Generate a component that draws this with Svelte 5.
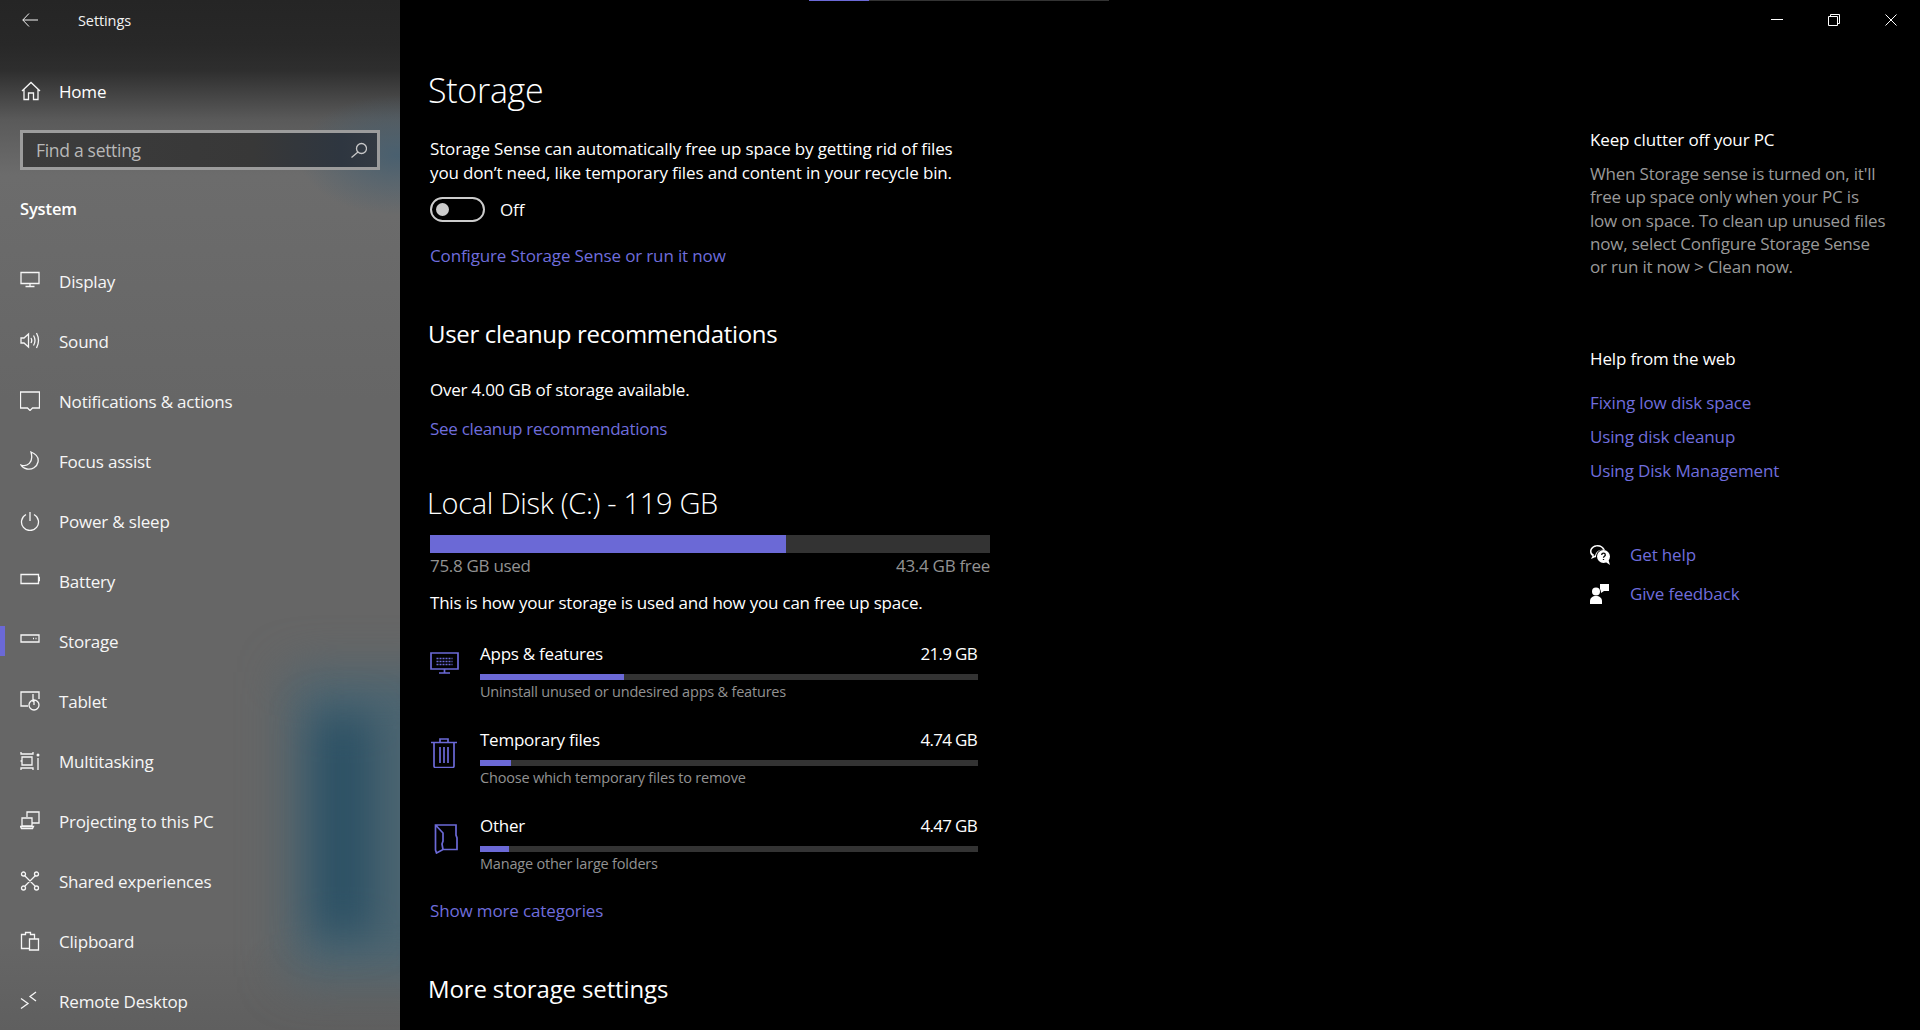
<script>
  const nav = [
    { label: 'Display', d: 'M1 1.500h18v11H1zM10 12.500v2.500M5.500 15.500h9' },
    { label: 'Sound', d: 'M1 7v5h3l4.500 4V3L4 7zM11 7q1.500 2.500 0 5M13.500 4.500q3 5 0 10M16.500 2q4 7.500 0 15' },
    { label: 'Notifications & actions', d: 'M.5 1h19v16h-7l-2.500 2.500L7.500 17H.5z' },
    { label: 'Focus assist', d: 'M11 1c5 2 8 5 7 10-1 5-6 8-11 7-3-.500-5-2-6-4 6 2 13-2 10-13z' },
    { label: 'Power & sleep', d: 'M10 1v9M6 3.500a8.500 8.500 0 1 0 8 0' },
    { label: 'Battery', d: 'M1 3.500h17.500v9H1zM18.500 6.500h1v3h-1' },
    { label: 'Storage', active: true, d: 'M1 4h18v7H1zM13 7.500h1M15.500 7.500h1' },
    { label: 'Tablet', d: 'M8 15H1V1h18v7M13 3v8M9 14a5 5 0 1 0 10 0 5 5 0 0 0-10 0M14 9v5' },
    { label: 'Multitasking', d: 'M1 1v2h12V1M1 19v-2h12v2M2 6h10v8H2zM18 7v12M.5 10h1', dot: true },
    { label: 'Projecting to this PC', d: 'M7 6V1h12v11h-7M2 7h10v8H2zM.5 15.500h13l-1 2h-11z' },
    { label: 'Shared experiences', d: 'M5 5l10 10M15 5L5 15M1.500 3a2 2 0 1 0 4 0 2 2 0 0 0-4 0M14.500 3a2 2 0 1 0 4 0 2 2 0 0 0-4 0M1.500 17a2 2 0 1 0 4 0 2 2 0 0 0-4 0M14.500 17a2 2 0 1 0 4 0 2 2 0 0 0-4 0' },
    { label: 'Clipboard', d: 'M9 17.500H1.500v-14h4V1.500h5v2h4v4M9.500 8h9v11h-9z' },
    { label: 'Remote Desktop', d: 'M1 7.500l7 5-7 5M16 1l-6 4.500 6 4.500' }
  ];
  const cats = [
    { name: 'Apps & features', size: '21.9 GB', w: 144, sub: 'Uninstall unused or undesired apps & features', kind: 'apps' },
    { name: 'Temporary files', size: '4.74 GB', w: 31, sub: 'Choose which temporary files to remove', kind: 'trash' },
    { name: 'Other', size: '4.47 GB', w: 29, sub: 'Manage other large folders', kind: 'other' }
  ];
</script>

<div class="window">
  <aside class="side">
    <header class="titlebar">
      <svg class="back" width="16" height="14" viewBox="0 0 16 14"><path d="M7 .5L.8 7 7 13.500M.8 7H16" /></svg>
      <span>Settings</span>
    </header>
    <div class="home">
      <svg class="ic" width="20" height="20" viewBox="0 0 20 20"><path d="M1 10L10 1.500 19 10M3 8.500V18.500h4.500V12h5v6.500H17V8.500" /></svg>
      <span>Home</span>
    </div>
    <div class="search">
      <span>Find a setting</span>
      <svg class="ic" width="16" height="16" viewBox="0 0 16 16"><path d="M5.500 6.500a5 5 0 1 0 10 0 5 5 0 0 0-10 0M7 10L.5 15.500" /></svg>
    </div>
    <div class="group">System</div>
    <nav>
      {#each nav as item}
        <div class="item" class:active={item.active}>
          <svg class="ic" width="20" height="20" viewBox="0 0 20 20">
            <path d={item.d} />
            {#if item.dot}<circle class="dot" cx="18" cy="4" r="1.500" />{/if}
          </svg>
          <span>{item.label}</span>
        </div>
      {/each}
    </nav>
  </aside>

  <main class="main">
    <div class="loader"><i></i></div>
    <div class="controls">
      <svg width="12" height="12" viewBox="0 0 12 12"><path d="M0 5.500h12" /></svg>
      <svg width="12" height="12" viewBox="0 0 12 12"><path d="M.5 2.500h9v9h-9zM2.500 2.500v-2h9v9h-2" /></svg>
      <svg width="12" height="12" viewBox="0 0 12 12"><path d="M.5.500l11 11M11.500.500l-11 11" /></svg>
    </div>

    <section class="content">
      <h1 class="title">Storage</h1>
      <p class="para">Storage Sense can automatically free up space by getting rid of files<br />you don’t need, like temporary files and content in your recycle bin.</p>
      <div class="toggle-row">
        <span class="toggle"><i></i></span>
        <span>Off</span>
      </div>
      <div class="link l1">Configure Storage Sense or run it now</div>
      <h2 class="h-user">User cleanup recommendations</h2>
      <p class="over">Over 4.00 GB of storage available.</p>
      <div class="link l2">See cleanup recommendations</div>
      <h1 class="disk">Local Disk (C:) - 119 GB</h1>
      <div class="bar"><i></i></div>
      <div class="labels"><span>75.8 GB used</span><span>43.4 GB free</span></div>
      <p class="how">This is how your storage is used and how you can free up space.</p>

      <div class="cats">
        {#each cats as c}
          <div class="cat">
            <div class="cat-ic">
              {#if c.kind === 'apps'}
                <svg width="29" height="22" viewBox="0 0 29 22"><path d="M1 1h27v16H1zM14.500 17v3.500M9 21h11" /><path class="dash" d="M6.500 6.500h16M6.500 9.500h16M6.500 12.500h16" /></svg>
              {:else if c.kind === 'trash'}
                <svg class="s2" width="26" height="30" viewBox="0 0 26 30"><path d="M0 4.500h26M3 4.500v23.500a1.500 1.500 0 0 0 1.500 1.500h17a1.500 1.500 0 0 0 1.500-1.500V4.500M9 4.500V1h8v3.500M9 9v16M13 9v16M17 9v16" /></svg>
              {:else}
                <svg class="s3" width="24" height="30" viewBox="0 0 24 30"><path d="M1.500 1H22v10l1 3v11.500H9L2.500 29 1.500 26zM1.500 1L9 9v8l-1 3 1 5.500" /></svg>
              {/if}
            </div>
            <div class="cat-body">
              <div class="cat-head"><span>{c.name}</span><span class="size">{c.size}</span></div>
              <div class="cat-bar"><i style="width:{c.w}px"></i></div>
              <div class="cat-sub">{c.sub}</div>
            </div>
          </div>
        {/each}
      </div>

      <div class="link l3">Show more categories</div>
      <h2 class="h-more">More storage settings</h2>
    </section>

    <section class="aside">
      <h3>Keep clutter off your PC</h3>
      <p class="help">When Storage sense is turned on, it'll<br />free up space only when your PC is<br />low on space. To clean up unused files<br />now, select Configure Storage Sense<br />or run it now &gt; Clean now.</p>
      <h3 class="web">Help from the web</h3>
      <div class="link w1">Fixing low disk space</div>
      <div class="link w2">Using disk cleanup</div>
      <div class="link w2">Using Disk Management</div>
      <div class="act a1">
        <svg width="20" height="20" viewBox="0 0 20 20"><path class="fill" d="M7.500 0C3 0 0 3 0 6.500c0 2 1 3.500 2.500 4.500L1 14l4-1.800c.4 0 .7.100 1 .1A7 7 0 0 1 15 5C14 2 11 0 7.500 0zM7.500 1.500c2.500 0 4.500 1.200 5.500 3a7.500 7.500 0 0 0-8 6L3.500 11l.6-1.300C2.500 8.800 1.500 7.800 1.500 6.500c0-2.800 2.700-5 6-5z" /><circle class="fill" cx="13.500" cy="11.500" r="6.500" /><path class="fill" d="M15 16.500L20 20l-1.500-5z" /><path class="q" d="M11.700 10c0-2.400 3.600-2.400 3.600 0 0 1.300-1.800 1.300-1.800 2.800M13.500 14v1" /></svg>
        <span class="link">Get help</span>
      </div>
      <div class="act a2">
        <svg width="20" height="20" viewBox="0 0 20 20"><path class="fill" d="M10 0h9v7h-5l-3 2c0-2-.5-3-1-4z" /><circle class="fill" cx="6" cy="7.500" r="4" /><path class="fill" d="M0 20v-3c0-3 2.500-5 6-5s6 2 6 5v3z" /></svg>
        <span class="link">Give feedback</span>
      </div>
    </section>
  </main>
</div>

<style>
  :global(body) { margin: 0; background: #000; }
  .window {
    display: flex;
    height: 1030px;
    overflow: hidden;
    color: #fff;
    font-family: "Open Sans", "Noto Sans", sans-serif;
    font-size: 17px;
    letter-spacing: -0.14px;
  }
  h1, h2, h3, p { margin: 0; font-weight: 400; }

  /* sidebar */
  .side {
    width: 400px;
    flex: none;
    box-sizing: border-box;
    height: 1030px;
    position: relative;
    overflow: hidden;
    letter-spacing: -0.2px;
    background:
      radial-gradient(ellipse 100px 60px at 398px 155px, rgba(70, 95, 112, 0.9), rgba(80, 92, 102, 0)),
      linear-gradient(180deg, #252525 0, #282828 45px, #2e2e2e 70px, #444 95px, #5a5a5a 120px, #6c6c6c 175px, #666 400px, #666 940px, #5f5f5f 1030px);
  }
  .side::before, .side::after { content: ''; position: absolute; }
  .side::before { left: 290px; top: 672px; width: 160px; height: 305px; background: #4c6571; filter: blur(24px); }
  .side::after { left: 314px; top: 715px; width: 58px; height: 220px; background: #2b5064; filter: blur(20px); }
  .side > * { position: relative; z-index: 1; }
  .titlebar { height: 40px; display: flex; align-items: center; padding-left: 22px; font-size: 14.500px; letter-spacing: -0.1px; color: #f2f2f2; }
  .titlebar span { margin-left: 40px; }
  .back path { fill: none; stroke: #f4f4f4; stroke-width: 1; }
  .ic { flex: none; }
  .ic path { fill: none; stroke: #f6f6f6; stroke-width: 1.300; }
  .ic .dot { fill: #f6f6f6; }
  .home { display: flex; align-items: center; gap: 18px; height: 30px; margin-top: 36px; padding-left: 21px; }
  .search {
    box-sizing: border-box;
    display: flex; align-items: center; justify-content: space-between;
    width: 360px; height: 40px; margin: 24px 0 0 20px; padding: 0 10px 0 13px;
    border: 3px solid #9c9c9c;
    background: linear-gradient(90deg, #3c3c3c, #383838 65%, #2e3640 90%, #333a42);
    color: #b8b8b8; font-size: 17.500px; letter-spacing: -0.3px;
  }
  .search .ic path { stroke: #c8c8c8; }
  .group { margin: 24px 0 0 20px; line-height: 30px; font-size: 16.500px; font-weight: 600; letter-spacing: -0.14px; }
  nav { margin-top: 27px; }
  .item {
    height: 60px; display: flex; align-items: center; gap: 19px;
    padding-left: 20px; color: #f6f6f6;
    position: relative;
  }
  .item.active::before {
    content: ''; position: absolute; left: 0; top: 15px; width: 5px; height: 30px; background: #6b69d6;
  }

  /* main */
  .main { flex: 1; display: flex; position: relative; background: #000; }
  .loader { position: absolute; left: 409px; top: 0; width: 300px; height: 1px; background: #333; }
  .loader i { display: block; width: 60px; height: 1px; background: #6b69d6; }
  .controls { position: absolute; right: 23px; top: 14px; display: flex; gap: 45px; }
  .controls path { fill: none; stroke: #fff; stroke-width: 1; }

  .content { width: 562px; padding: 70px 0 0 30px; flex: none; }
  .title { font-size: 34px; line-height: 40px; margin-left: -2px; font-weight: 300; letter-spacing: -0.3px; }
  .para { margin-top: 27px; line-height: 24px; }
  .toggle-row { display: flex; align-items: center; gap: 15px; margin-top: 11px; height: 26px; }
  .toggle { box-sizing: border-box; width: 55px; height: 25px; border: 2.500px solid #ccc; border-radius: 13px; display: flex; align-items: center; padding-left: 4px; }
  .toggle i { width: 13px; height: 13px; border-radius: 50%; background: #ccc; }
  .link { color: #6f6ddc; line-height: 24px; }
  .l1 { margin-top: 22px; }
  .h-user { margin: 50px 0 0 -2px; font-size: 24px; line-height: 32px; letter-spacing: -0.32px; }
  .over { margin-top: 28px; line-height: 24px; letter-spacing: -0.22px; }
  .l2 { margin-top: 15px; letter-spacing: -0.3px; }
  .disk { margin: 42px 0 0 -3px; font-size: 29px; line-height: 40px; font-weight: 300; letter-spacing: -0.32px; }
  .bar { width: 560px; height: 18px; margin-top: 12px; background: #333; }
  .bar i { display: block; width: 356px; height: 18px; background: #6b69d6; }
  .labels { display: flex; justify-content: space-between; width: 560px; margin-top: 2px; line-height: 22px; color: #929292; letter-spacing: -0.3px; }
  .how { margin-top: 14px; line-height: 24px; letter-spacing: -0.22px; }

  .cats { margin-top: 27px; margin-bottom: -1px; }
  .cat { display: flex; height: 86px; }
  .cat-ic { width: 50px; flex: none; display: flex; justify-content: flex-start; }
  .cat-ic svg { margin-top: 10px; }
  .cat-ic .s2 { margin-left: 1px; }
  .cat-ic .s3 { margin-left: 4px; }
  .cat-ic path { fill: none; stroke: #6b69d6; stroke-width: 1.700; }
  .cat-ic .dash { stroke-dasharray: 2 1; }
  .cat-body { width: 498px; }
  .cat-head { display: flex; justify-content: space-between; line-height: 24px; padding-right: 1px; letter-spacing: -0.25px; }
  .cat-head .size { letter-spacing: -0.7px; }
  .cat-bar { height: 6px; margin-top: 8px; background: #333; }
  .cat-bar i { display: block; height: 6px; background: #6b69d6; }
  .cat-sub { margin-top: 1px; font-size: 14.500px; line-height: 22px; letter-spacing: -0.2px; color: #929292; }

  .h-more { margin: 50px 0 0 -2px; font-size: 24px; line-height: 32px; }

  /* right column */
  .aside { margin-left: 598px; padding-top: 128px; width: 320px; flex: none; }
  .aside h3 { font-size: 17px; line-height: 24px; }
  .help { margin-top: 10px; line-height: 23.250px; color: #999; letter-spacing: -0.2px; }
  .aside .web { margin-top: 69px; }
  .w1 { margin-top: 20px; }
  .w2 { margin-top: 10px; }
  .act { display: flex; align-items: center; gap: 20px; height: 24px; }
  .a1 { margin-top: 60px; }
  .a2 { margin-top: 15px; }
  .act .fill { fill: #fff; }
  .act .q { fill: none; stroke: #000; stroke-width: 1.300; }
</style>
